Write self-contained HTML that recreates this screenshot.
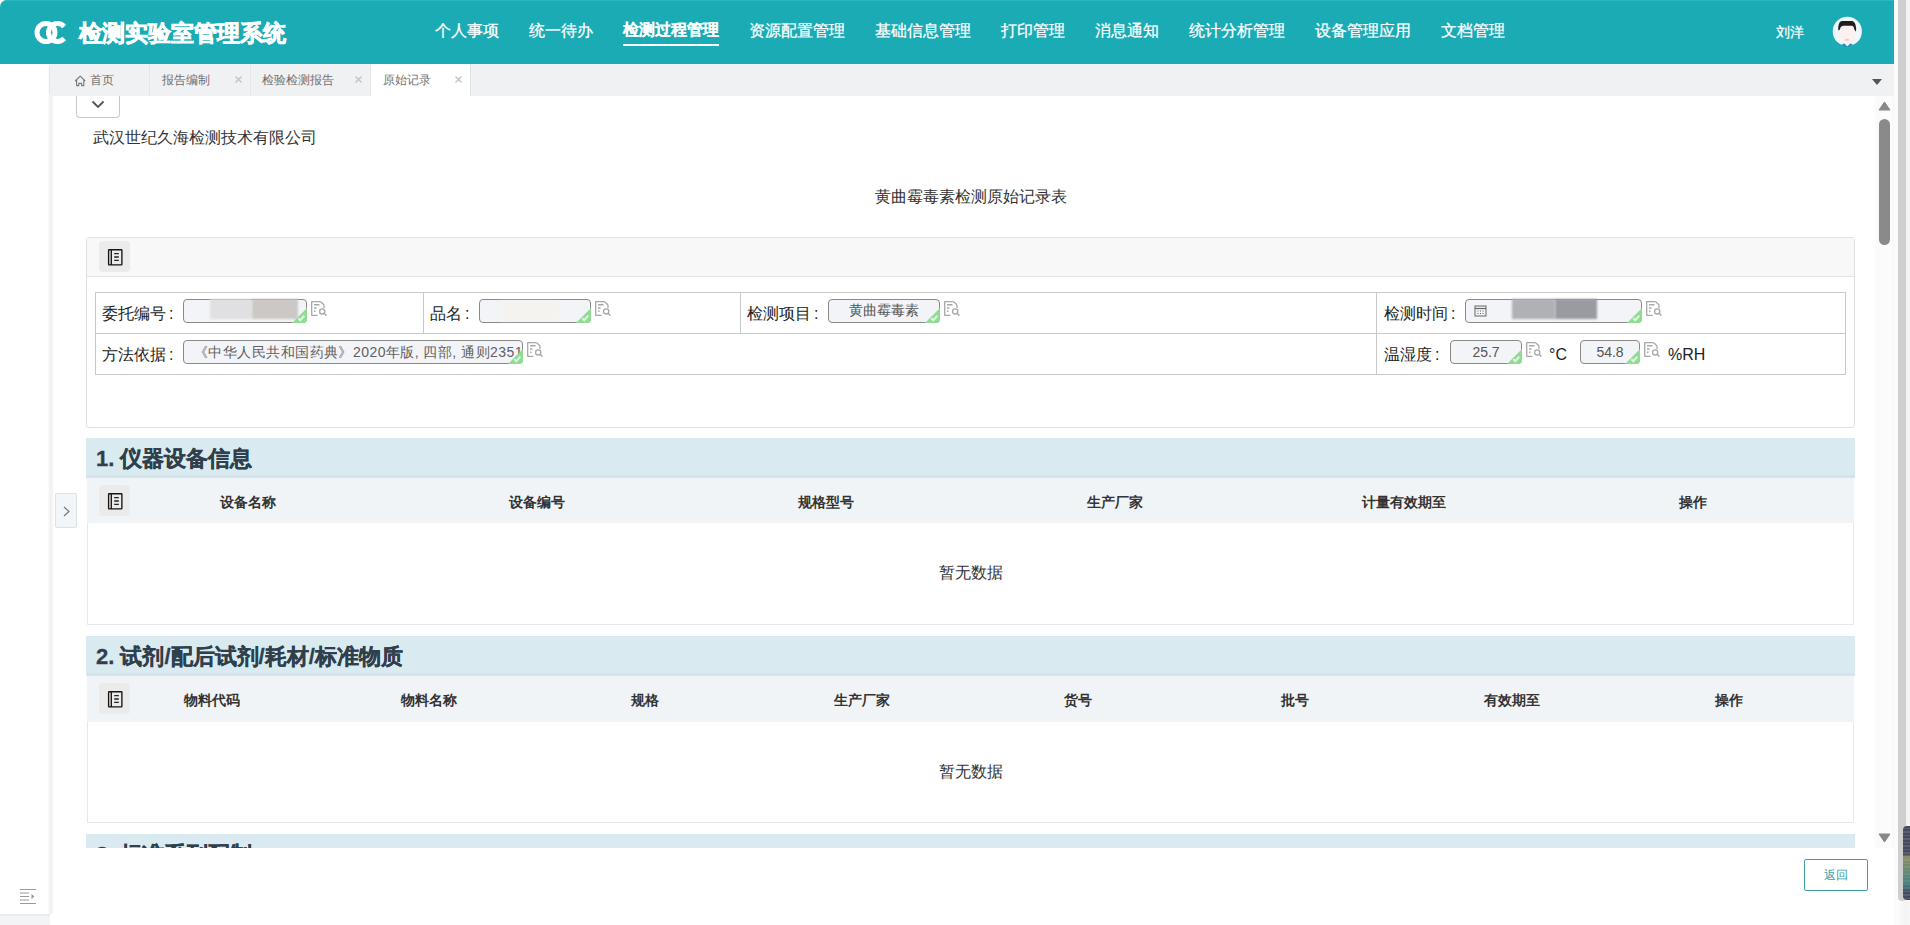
<!DOCTYPE html>
<html><head><meta charset="utf-8">
<style>
*{box-sizing:border-box;margin:0;padding:0}
html,body{width:1910px;height:925px;overflow:hidden;background:#fff;font-family:"Liberation Sans",sans-serif;color:#333}
.abs{position:absolute}
#hdr{position:absolute;left:0;top:0;width:1894px;height:64px;background:#1aabb4;border-top-left-radius:7px;box-shadow:inset 0 1px 0 #2cb6be}
#hdr .title{position:absolute;left:79px;top:18px;font-size:23px;font-weight:bold;color:#fff;line-height:30px;-webkit-text-stroke:0.7px #fff}
.nav{position:absolute;top:21px;font-size:16px;line-height:20px;color:#fff;white-space:nowrap;-webkit-text-stroke:0.25px #fff}
.nav.act{font-weight:bold;-webkit-text-stroke:0.1px #fff}
.nav.act:after{content:"";position:absolute;left:0;right:0;top:23.5px;height:2.5px;background:#fff}
#tabs{position:absolute;left:50px;top:64px;width:1844px;height:32px;background:#f0f1f3}
.tab{position:absolute;top:0;height:32px;font-size:12px;line-height:33px;color:#707070;border-right:1px solid #e0e1e4;box-shadow:-3px 0 0 -2px #e6e7ea}
.tab .t{position:absolute;left:13px;top:0}
.tab .x{position:absolute;right:8px;top:12px;width:7px;height:7px}
#side{position:absolute;left:0;top:64px;width:54px;height:850px;background:linear-gradient(to right,#fff 0,#fff 48px,#f5f5f5 49px,#f1f1f2 51px,#f8f8f8 53px,#fff 54px)}
.lbl{position:absolute;margin-top:1px;font-size:16px;line-height:20px;color:#222;white-space:nowrap}
.inp{position:absolute;height:24px;border:1px solid #8a8a8a;border-radius:4px;background:#f3f4f8;font-size:13px;line-height:22px;color:#555;text-align:center;white-space:nowrap}
.inp .ok{position:absolute;right:-1px;bottom:-1px}

.srch{position:absolute;width:16px;height:16px}
.band{position:absolute;left:86px;width:1769px;height:40px;background:#d9eaf0;box-shadow:inset 0 -3px 0 #d3e5eb}
.band .bt{position:absolute;left:10px;top:8px;font-size:22px;line-height:26px;font-weight:bold;color:#303f4c;white-space:nowrap;-webkit-text-stroke:0.3px #303f4c}
.thead{position:absolute;left:87px;width:1767px;height:45px;background:#f0f4f7}
.tbody{position:absolute;left:87px;width:1767px;height:102px;background:#fff;border:1px solid #e6e8eb;border-top:none}
.th{position:absolute;top:2px;line-height:45px;font-size:13.5px;font-weight:bold;color:#333;text-align:center;white-space:nowrap}
.ib{position:absolute;width:31px;height:31px;background:#ebebeb;border-radius:4px}
.empty{position:absolute;left:0;right:0;font-size:16px;line-height:20px;text-align:center;color:#333}
</style></head><body>

<div id="hdr">
  <svg class="abs" style="left:30px;top:20px" width="42" height="26" viewBox="0 0 42 26">
    <circle cx="16" cy="12.5" r="9" fill="none" stroke="#fff" stroke-width="5"/>
    <path d="M34.2 6.5 A9 9 0 1 0 34.2 18.5" fill="none" stroke="#fff" stroke-width="5"/>
  </svg>
  <div class="title">检测实验室管理系统</div>
  <div class="nav" style="left:435px">个人事项</div>
  <div class="nav" style="left:529px">统一待办</div>
  <div class="nav act" style="left:623px;top:20px">检测过程管理</div>
  <div class="nav" style="left:749px">资源配置管理</div>
  <div class="nav" style="left:875px">基础信息管理</div>
  <div class="nav" style="left:1001px">打印管理</div>
  <div class="nav" style="left:1095px">消息通知</div>
  <div class="nav" style="left:1189px">统计分析管理</div>
  <div class="nav" style="left:1315px">设备管理应用</div>
  <div class="nav" style="left:1441px">文档管理</div>
  <div class="nav" style="left:1776px;top:22px;font-size:14px">刘洋</div>
  <svg class="abs" style="left:1831px;top:16px" width="32" height="32" viewBox="0 0 32 32">
    <circle cx="16.3" cy="15.4" r="14.6" fill="#eef8fc"/>
    <ellipse cx="16.2" cy="18.5" rx="8" ry="10" fill="#fcf0f0"/>
    <ellipse cx="16" cy="23.8" rx="2.2" ry="1.1" fill="#f2c6c0"/>
    <path d="M7.3 14.5 Q6.8 6.2 10.5 5 H21.5 Q25.8 6.5 25 15.8 L23.3 13.5 Q23 10 20.5 9.8 H12 Q9.2 10.2 9 13.5Z" fill="#241c1c"/>
    <path d="M10.5 28.5 L13.5 27.5 L16.3 30.5 L19.2 27.5 L22 28.5 L20 30.5 L12.5 30.5Z" fill="#2a8fc0"/>
  </svg>
</div>

<div id="side"></div>

<div id="tabs">
  <div class="tab" style="left:0;width:100px">
    <svg class="abs" style="left:24px;top:10px" width="13" height="13" viewBox="0 0 13 13"><path d="M1.2 7 L6.2 2.2 L11.2 7 M2.6 5.8 V11.6 H4.8 V9.4 H7.6 V11.6 H9.8 V5.8" fill="none" stroke="#777" stroke-width="1.1" stroke-linejoin="round"/></svg>
    <span class="t" style="left:40px">首页</span>
  </div>
  <div class="tab" style="left:100px;width:101px"><span class="t" style="left:12px">报告编制</span>
    <svg class="x" viewBox="0 0 7 7"><path d="M0.5 .5L6.5 6.5M6.5 .5L.5 6.5" stroke="#c2c2c2" stroke-width="1.3"/></svg></div>
  <div class="tab" style="left:201px;width:120px"><span class="t" style="left:11px">检验检测报告</span>
    <svg class="x" viewBox="0 0 7 7"><path d="M0.5 .5L6.5 6.5M6.5 .5L.5 6.5" stroke="#c2c2c2" stroke-width="1.3"/></svg></div>
  <div class="tab" style="left:321px;width:100px;background:#fff"><span class="t" style="left:12px">原始记录</span>
    <svg class="x" viewBox="0 0 7 7"><path d="M0.5 .5L6.5 6.5M6.5 .5L.5 6.5" stroke="#c2c2c2" stroke-width="1.3"/></svg></div>
  <svg class="abs" style="left:1822px;top:15px" width="10" height="6" viewBox="0 0 10 6"><path d="M0 0H10L5 6Z" fill="#555"/></svg>
</div>


<div class="abs" style="left:0;top:96px;width:1894px;height:752px;overflow:hidden">
<div class="abs" style="left:0;top:-96px;width:1894px;height:925px">
  <!-- toggle -->
  <div class="abs" style="left:76px;top:96px;width:44px;height:22px;border:1px solid #c9c9c9;border-top:none;border-radius:0 0 4px 4px;background:#fff">
    <svg class="abs" style="left:14px;top:4px" width="14" height="9" viewBox="0 0 14 9"><path d="M1.5 1.5 L7 7 L12.5 1.5" fill="none" stroke="#555" stroke-width="1.8"/></svg>
  </div>
  <div class="abs" style="left:93px;top:128px;font-size:16px;line-height:20px;color:#333">武汉世纪久海检测技术有限公司</div>
  <div class="abs" style="left:875px;top:187px;font-size:16px;line-height:20px;color:#333">黄曲霉毒素检测原始记录表</div>

  <!-- form panel -->
  <div class="abs" style="left:86px;top:237px;width:1769px;height:191px;border:1px solid #dfe1e4;border-radius:3px;background:#fff">
    <div class="abs" style="left:0;top:0;width:1767px;height:39px;background:#f8f8f8;border-bottom:1px solid #e3e3e3"></div>
  </div>
  <div class="ib" style="left:99px;top:241px"></div>
  <svg class="abs" style="left:107px;top:249px" width="16" height="17" viewBox="0 0 16 17"><rect x="1.6" y="0.7" width="13.3" height="15.2" rx="0.6" fill="none" stroke="#151515" stroke-width="1.35"/><path d="M4.3 0.7V15.9" stroke="#151515" stroke-width="1.35"/><path d="M7.2 4.6H11.8M7.2 8H11.8M7.2 11.4H11.8" stroke="#222" stroke-width="1.3"/></svg>
  <!-- form table -->
  <div class="abs" style="left:95px;top:292px;width:1751px;height:83px;border:1px solid #c9c9c9"></div>
  <div class="abs" style="left:96px;top:333px;width:1749px;height:1px;background:#c9c9c9"></div>
  <div class="abs" style="left:423px;top:293px;width:1px;height:40px;background:#c9c9c9"></div>
  <div class="abs" style="left:740px;top:293px;width:1px;height:40px;background:#c9c9c9"></div>
  <div class="abs" style="left:1376px;top:293px;width:1px;height:81px;background:#c9c9c9"></div>

  <div class="lbl" style="left:102px;top:303px">委托编号<span style="margin-left:3px">:</span></div>
  <div class="inp" style="left:183px;top:299px;width:124px">
     <div class="abs" style="left:26px;top:-1px;width:42px;height:20px;background:#e0e0e2;filter:blur(0.8px)"></div>
     <div class="abs" style="left:68px;top:-1px;width:46px;height:20px;background:#ccc8c6;filter:blur(1.2px)"></div>
     <svg class="ok" width="15" height="15" viewBox="0 0 15 15"><path d="M15 0 V11 Q15 15 11 15 H0 Z" fill="#90dc93"/><path d="M6.3 10.2 L8.3 12.2 L12.3 7.6" fill="none" stroke="#dcf7dd" stroke-width="2"/></svg></div>
  <svg class="srch" style="left:311px;top:301px" viewBox="0 0 16 16"><path d="M13 7 V4.8 Q13 4 12.3 3.3 L10 1 Q9.4 0.7 8.6 0.7 H0.7 V14.3 H6.5" fill="none" stroke="#a8a8a8" stroke-width="1.3" stroke-linejoin="round"/><path d="M3 3.8H8.5M3 7H5.5M3 10.2H4.5" stroke="#a8a8a8" stroke-width="1.4"/><circle cx="11.2" cy="10.4" r="2.6" fill="#fff" stroke="#a8a8a8" stroke-width="1.3"/><path d="M13.1 12.3L15 14.2" stroke="#a8a8a8" stroke-width="1.4" stroke-linecap="round"/></svg>
  <div class="lbl" style="left:430px;top:303px">品名<span style="margin-left:3px">:</span></div>
  <div class="inp" style="left:479px;top:299px;width:112px"><div class="abs" style="left:20px;top:2px;width:60px;height:18px;background:#f5f3ef;filter:blur(2px)"></div><svg class="ok" width="15" height="15" viewBox="0 0 15 15"><path d="M15 0 V11 Q15 15 11 15 H0 Z" fill="#90dc93"/><path d="M6.3 10.2 L8.3 12.2 L12.3 7.6" fill="none" stroke="#dcf7dd" stroke-width="2"/></svg></div>
  <svg class="srch" style="left:595px;top:301px" viewBox="0 0 16 16"><path d="M13 7 V4.8 Q13 4 12.3 3.3 L10 1 Q9.4 0.7 8.6 0.7 H0.7 V14.3 H6.5" fill="none" stroke="#a8a8a8" stroke-width="1.3" stroke-linejoin="round"/><path d="M3 3.8H8.5M3 7H5.5M3 10.2H4.5" stroke="#a8a8a8" stroke-width="1.4"/><circle cx="11.2" cy="10.4" r="2.6" fill="#fff" stroke="#a8a8a8" stroke-width="1.3"/><path d="M13.1 12.3L15 14.2" stroke="#a8a8a8" stroke-width="1.4" stroke-linecap="round"/></svg>
  <div class="lbl" style="left:747px;top:303px">检测项目<span style="margin-left:3px">:</span></div>
  <div class="inp" style="left:828px;top:299px;width:112px;font-size:13.5px">黄曲霉毒素<svg class="ok" width="15" height="15" viewBox="0 0 15 15"><path d="M15 0 V11 Q15 15 11 15 H0 Z" fill="#90dc93"/><path d="M6.3 10.2 L8.3 12.2 L12.3 7.6" fill="none" stroke="#dcf7dd" stroke-width="2"/></svg></div>
  <svg class="srch" style="left:944px;top:301px" viewBox="0 0 16 16"><path d="M13 7 V4.8 Q13 4 12.3 3.3 L10 1 Q9.4 0.7 8.6 0.7 H0.7 V14.3 H6.5" fill="none" stroke="#a8a8a8" stroke-width="1.3" stroke-linejoin="round"/><path d="M3 3.8H8.5M3 7H5.5M3 10.2H4.5" stroke="#a8a8a8" stroke-width="1.4"/><circle cx="11.2" cy="10.4" r="2.6" fill="#fff" stroke="#a8a8a8" stroke-width="1.3"/><path d="M13.1 12.3L15 14.2" stroke="#a8a8a8" stroke-width="1.4" stroke-linecap="round"/></svg>
  <div class="lbl" style="left:1384px;top:303px">检测时间<span style="margin-left:3px">:</span></div>
  <div class="inp" style="left:1465px;top:299px;width:177px">
     <svg class="abs" style="left:8px;top:5px" width="13" height="12" viewBox="0 0 13 12"><rect x="1" y="1" width="11" height="10" fill="none" stroke="#666" stroke-width="1"/><path d="M1 3.5H12" stroke="#666" stroke-width="1.2"/><path d="M3.5 6H4.5M6 6H7M8.5 6H9.5M3.5 8.5H4.5M6 8.5H7M8.5 8.5H9.5" stroke="#666" stroke-width="1"/></svg>
     <div class="abs" style="left:46px;top:-1px;width:43px;height:20px;background:#b0b1b5;filter:blur(1px)"></div>
     <div class="abs" style="left:89px;top:-1px;width:42px;height:20px;background:#9a9aa2;filter:blur(0.8px)"></div>
     <svg class="ok" width="15" height="15" viewBox="0 0 15 15"><path d="M15 0 V11 Q15 15 11 15 H0 Z" fill="#90dc93"/><path d="M6.3 10.2 L8.3 12.2 L12.3 7.6" fill="none" stroke="#dcf7dd" stroke-width="2"/></svg></div>
  <svg class="srch" style="left:1646px;top:301px" viewBox="0 0 16 16"><path d="M13 7 V4.8 Q13 4 12.3 3.3 L10 1 Q9.4 0.7 8.6 0.7 H0.7 V14.3 H6.5" fill="none" stroke="#a8a8a8" stroke-width="1.3" stroke-linejoin="round"/><path d="M3 3.8H8.5M3 7H5.5M3 10.2H4.5" stroke="#a8a8a8" stroke-width="1.4"/><circle cx="11.2" cy="10.4" r="2.6" fill="#fff" stroke="#a8a8a8" stroke-width="1.3"/><path d="M13.1 12.3L15 14.2" stroke="#a8a8a8" stroke-width="1.4" stroke-linecap="round"/></svg>

  <div class="lbl" style="left:102px;top:344px">方法依据<span style="margin-left:3px">:</span></div>
  <div class="inp" style="left:183px;top:340px;width:340px;text-align:left;padding-left:10px;font-size:14px;letter-spacing:0.45px;color:#606060">《中华人民共和国药典》2020年版, 四部, 通则2351<svg class="ok" width="15" height="15" viewBox="0 0 15 15"><path d="M15 0 V11 Q15 15 11 15 H0 Z" fill="#90dc93"/><path d="M6.3 10.2 L8.3 12.2 L12.3 7.6" fill="none" stroke="#dcf7dd" stroke-width="2"/></svg></div>
  <svg class="srch" style="left:527px;top:342px" viewBox="0 0 16 16"><path d="M13 7 V4.8 Q13 4 12.3 3.3 L10 1 Q9.4 0.7 8.6 0.7 H0.7 V14.3 H6.5" fill="none" stroke="#a8a8a8" stroke-width="1.3" stroke-linejoin="round"/><path d="M3 3.8H8.5M3 7H5.5M3 10.2H4.5" stroke="#a8a8a8" stroke-width="1.4"/><circle cx="11.2" cy="10.4" r="2.6" fill="#fff" stroke="#a8a8a8" stroke-width="1.3"/><path d="M13.1 12.3L15 14.2" stroke="#a8a8a8" stroke-width="1.4" stroke-linecap="round"/></svg>
  <div class="lbl" style="left:1384px;top:344px">温湿度<span style="margin-left:3px">:</span></div>
  <div class="inp" style="left:1450px;top:340px;width:72px;font-size:14px">25.7<svg class="ok" width="15" height="15" viewBox="0 0 15 15"><path d="M15 0 V11 Q15 15 11 15 H0 Z" fill="#90dc93"/><path d="M6.3 10.2 L8.3 12.2 L12.3 7.6" fill="none" stroke="#dcf7dd" stroke-width="2"/></svg></div>
  <svg class="srch" style="left:1526px;top:342px" viewBox="0 0 16 16"><path d="M13 7 V4.8 Q13 4 12.3 3.3 L10 1 Q9.4 0.7 8.6 0.7 H0.7 V14.3 H6.5" fill="none" stroke="#a8a8a8" stroke-width="1.3" stroke-linejoin="round"/><path d="M3 3.8H8.5M3 7H5.5M3 10.2H4.5" stroke="#a8a8a8" stroke-width="1.4"/><circle cx="11.2" cy="10.4" r="2.6" fill="#fff" stroke="#a8a8a8" stroke-width="1.3"/><path d="M13.1 12.3L15 14.2" stroke="#a8a8a8" stroke-width="1.4" stroke-linecap="round"/></svg>
  <div class="lbl" style="left:1549px;top:344px">°C</div>
  <div class="inp" style="left:1580px;top:340px;width:60px;font-size:14px">54.8<svg class="ok" width="15" height="15" viewBox="0 0 15 15"><path d="M15 0 V11 Q15 15 11 15 H0 Z" fill="#90dc93"/><path d="M6.3 10.2 L8.3 12.2 L12.3 7.6" fill="none" stroke="#dcf7dd" stroke-width="2"/></svg></div>
  <svg class="srch" style="left:1644px;top:342px" viewBox="0 0 16 16"><path d="M13 7 V4.8 Q13 4 12.3 3.3 L10 1 Q9.4 0.7 8.6 0.7 H0.7 V14.3 H6.5" fill="none" stroke="#a8a8a8" stroke-width="1.3" stroke-linejoin="round"/><path d="M3 3.8H8.5M3 7H5.5M3 10.2H4.5" stroke="#a8a8a8" stroke-width="1.4"/><circle cx="11.2" cy="10.4" r="2.6" fill="#fff" stroke="#a8a8a8" stroke-width="1.3"/><path d="M13.1 12.3L15 14.2" stroke="#a8a8a8" stroke-width="1.4" stroke-linecap="round"/></svg>
  <div class="lbl" style="left:1668px;top:344px">%RH</div>

  <!-- section 1 -->
  <div class="band" style="top:438px"><div class="bt">1. 仪器设备信息</div></div>
  <div class="thead" style="top:478px">
    <div class="th" style="left:16px;width:289px">设备名称</div>
    <div class="th" style="left:305px;width:289px">设备编号</div>
    <div class="th" style="left:594px;width:289px">规格型号</div>
    <div class="th" style="left:883px;width:289px">生产厂家</div>
    <div class="th" style="left:1172px;width:289px">计量有效期至</div>
    <div class="th" style="left:1461px;width:289px">操作</div>
  </div>
  <div class="ib" style="left:99px;top:485px"></div>
  <svg class="abs" style="left:107px;top:493px" width="16" height="17" viewBox="0 0 16 17"><rect x="1.6" y="0.7" width="13.3" height="15.2" rx="0.6" fill="none" stroke="#151515" stroke-width="1.35"/><path d="M4.3 0.7V15.9" stroke="#151515" stroke-width="1.35"/><path d="M7.2 4.6H11.8M7.2 8H11.8M7.2 11.4H11.8" stroke="#222" stroke-width="1.3"/></svg>
  <div class="tbody" style="top:523px"><div class="empty" style="top:40px">暂无数据</div></div>

  <!-- section 2 -->
  <div class="band" style="top:636px"><div class="bt">2. 试剂/配后试剂/耗材/标准物质</div></div>
  <div class="thead" style="top:676px;height:46px">
    <div class="th" style="left:16px;width:217px">物料代码</div>
    <div class="th" style="left:233px;width:217px">物料名称</div>
    <div class="th" style="left:450px;width:216px">规格</div>
    <div class="th" style="left:666px;width:217px">生产厂家</div>
    <div class="th" style="left:883px;width:216px">货号</div>
    <div class="th" style="left:1099px;width:217px">批号</div>
    <div class="th" style="left:1316px;width:217px">有效期至</div>
    <div class="th" style="left:1533px;width:217px">操作</div>
  </div>
  <div class="ib" style="left:99px;top:683px"></div>
  <svg class="abs" style="left:107px;top:691px" width="16" height="17" viewBox="0 0 16 17"><rect x="1.6" y="0.7" width="13.3" height="15.2" rx="0.6" fill="none" stroke="#151515" stroke-width="1.35"/><path d="M4.3 0.7V15.9" stroke="#151515" stroke-width="1.35"/><path d="M7.2 4.6H11.8M7.2 8H11.8M7.2 11.4H11.8" stroke="#222" stroke-width="1.3"/></svg>
  <div class="tbody" style="top:722px;height:101px"><div class="empty" style="top:40px">暂无数据</div></div>

  <!-- section 3 -->
  <div class="band" style="top:834px"><div class="bt">3. 标准系列配制</div></div>

  <!-- inner scrollbar -->
  <div class="abs" style="left:1874px;top:96px;width:20px;height:752px;background:linear-gradient(to right,#fff 0,#fafafa 3px,#fcfcfc 17px,#f7f7f7 20px)"></div>
  <svg class="abs" style="left:1878px;top:101px" width="13" height="10" viewBox="0 0 13 10"><path d="M6.5 1 L12 9 H1Z" fill="#888" stroke="#888" stroke-linejoin="round"/></svg>
  <div class="abs" style="left:1879px;top:119px;width:11px;height:126px;border-radius:6px;background:#8a8a8a"></div>
  <svg class="abs" style="left:1878px;top:833px" width="13" height="10" viewBox="0 0 13 10"><path d="M1 1 H12 L6.5 9Z" fill="#888" stroke="#888" stroke-linejoin="round"/></svg>
</div>
</div>



<!-- side extras -->
<div class="abs" style="left:55px;top:493px;width:22px;height:35px;background:#f1f6fa;border:1px solid #dde1e5;border-radius:2px">
  <svg class="abs" style="left:7px;top:12px" width="7" height="11" viewBox="0 0 7 11"><path d="M1 1 L6 5.5 L1 10" fill="none" stroke="#777" stroke-width="1.2"/></svg>
</div>
<svg class="abs" style="left:19px;top:888px" width="18" height="17" viewBox="0 0 18 17"><path d="M1 1.5H17M1 5H10M1 8.5H10M1 12H10M1 15.5H17" stroke="#9a9a9a" stroke-width="1"/><path d="M12.5 6 L15.5 8.5 L12.5 11Z" fill="#9a9a9a"/></svg>
<div class="abs" style="left:1804px;top:859px;width:64px;height:32px;border:1px solid #3c9ea3;border-radius:2px;font-size:12px;line-height:30px;text-align:center;color:#3c9ea3">返回</div>
<!-- right strip -->
<div class="abs" style="left:1894px;top:0;width:16px;height:925px;background:linear-gradient(to right,#fbfbfb 0,#fbfbfb 4px,#f3f3f3 12px,#f6f6f6 16px)"></div>
<div class="abs" style="left:1898px;top:0;width:8px;height:901px;background:#cfcfcf;border-radius:0 0 4px 4px"></div>
<div class="abs" style="left:1903px;top:826px;width:7px;height:74px;border-radius:4px 0 0 4px;background:linear-gradient(rgba(70,75,92,0) 0,rgba(70,75,92,0) 38%,rgba(200,200,110,.55) 42%,rgba(140,190,130,.55) 58%,rgba(80,170,160,.55) 78%,rgba(70,75,92,0) 90%),repeating-linear-gradient(#444a5c 0,#444a5c 2px,#5a6072 2px,#5a6072 3.5px)"></div>
<div class="abs" style="left:0;top:914px;width:50px;height:11px;background:#f3f4f6;border-top:2px solid #e9ebee"></div>
</body></html>
